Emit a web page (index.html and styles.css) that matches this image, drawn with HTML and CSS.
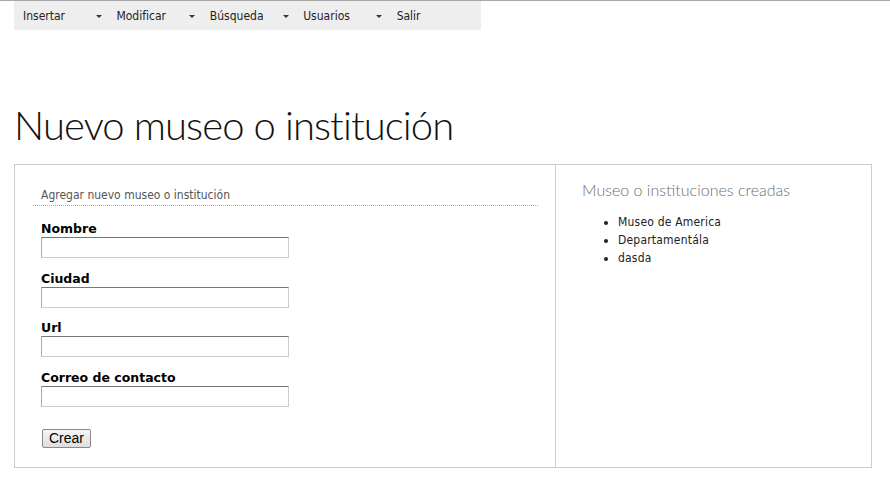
FILE: index.html
```html
<!DOCTYPE html>
<html lang="es">
<head>
<meta charset="utf-8">
<title>Nuevo museo o institución</title>
<link rel="stylesheet" href="styles.css">
</head>
<body>
<nav class="menu">
  <div class="item">Insertar<span class="caret"></span></div>
  <div class="item">Modificar<span class="caret"></span></div>
  <div class="item">Búsqueda<span class="caret"></span></div>
  <div class="item">Usuarios<span class="caret"></span></div>
  <div class="item">Salir</div>
</nav>
<h1 class="title">Nuevo museo o institución</h1>
<div class="panel">
  <section class="left">
    <h2 class="subtitle">Agregar nuevo museo o institución</h2>
    <form class="form">
      <label class="field"><span class="label">Nombre</span><input type="text" class="input"></label>
      <label class="field"><span class="label">Ciudad</span><input type="text" class="input"></label>
      <label class="field"><span class="label">Url</span><input type="text" class="input"></label>
      <label class="field"><span class="label">Correo de contacto</span><input type="text" class="input"></label>
      <button type="button" class="btn">Crear</button>
    </form>
  </section>
  <section class="right">
    <h2 class="side-title">Museo o instituciones creadas</h2>
    <ul class="list">
      <li>Museo de America</li>
      <li>Departamentála</li>
      <li>dasda</li>
    </ul>
  </section>
</div>
</body>
</html>
```
FILE: styles.css
```css
html, body {
  margin: 0;
  padding: 0;
  background: #fff;
}
body {
  border-top: 1px solid #a8a8a8;
  font-family: "DejaVu Sans Condensed", "DejaVu Sans", Verdana, sans-serif;
  color: #000;
}
.menu {
  display: flex;
  margin-left: 14px;
  width: 467px;
  height: 29px;
  background: #eeeeee;
}
.item {
  position: relative;
  width: 93.5px;
  box-sizing: border-box;
  padding-left: 9px;
  font-size: 12px;
  line-height: 30px;
  color: #222;
}
.caret {
  position: absolute;
  left: 82px;
  top: 14px;
  width: 0;
  height: 0;
  border-left: 3px solid transparent;
  border-right: 3px solid transparent;
  border-top: 3px solid #333;
}
.title {
  margin: 62px 0 6px 14px;
  font-family: "Lato", sans-serif;
  font-weight: 300;
  font-size: 40px;
  letter-spacing: -0.9px;
  line-height: 66px;
  color: #111;
}
.panel {
  display: flex;
  margin: 0 0 0 14px;
  width: 858px;
  height: 304px;
  box-sizing: border-box;
  border: 1px solid #cccccc;
}
.left {
  width: 541px;
  box-sizing: border-box;
  border-right: 1px solid #cccccc;
  padding: 22px 17px 0 18px;
}
.subtitle {
  margin: 0;
  padding: 0 0 2px 8px;
  font-size: 12px;
  font-weight: normal;
  line-height: 16px;
  color: #555;
  border-bottom: 1px dotted #aaa;
}
.form {
  display: flex;
  flex-direction: column;
  align-items: flex-start;
  padding: 15px 0 0 8px;
}
.field {
  display: flex;
  flex-direction: column;
  margin-bottom: 12.7px;
}
.label {
  font-family: "DejaVu Sans", Verdana, sans-serif;
  font-size: 12.5px;
  font-weight: bold;
  line-height: 16px;
}
.input {
  width: 248px;
  height: 21px;
  box-sizing: border-box;
  margin: 0;
  border: 1px solid #ccc;
  border-top-color: #777;
  border-left-color: #aaa;
  border-right-color: #ccc;
}
.btn {
  margin: 9px 0 0 1px;
  padding: 0 6px;
  height: 19px;
  font-family: "Liberation Sans", Arial, sans-serif;
  font-size: 14px;
  line-height: 16px;
  color: #000;
  background: linear-gradient(#f6f6f6, #dedede);
  border: 1px solid #8a8a8a;
  border-radius: 2px;
}
.right {
  flex: 1;
  padding: 14px 0 0 26px;
}
.side-title {
  margin: 0;
  font-family: "Lato", sans-serif;
  font-weight: 300;
  font-size: 16px;
  line-height: 22px;
  color: #6e6e6e;
}
.list {
  margin: 12px 0 0 0;
  padding-left: 36px;
  font-size: 12px;
  letter-spacing: 0.2px;
  line-height: 18px;
  color: #222;
}
```
